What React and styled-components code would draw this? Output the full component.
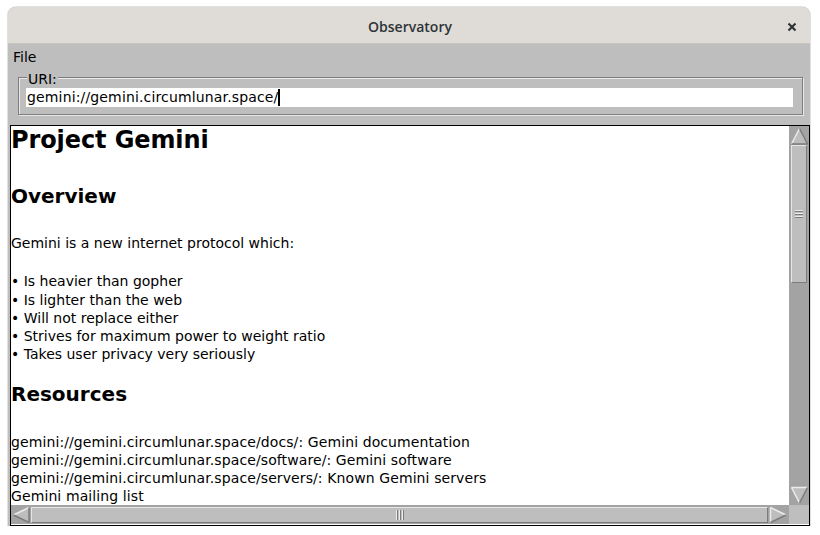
import React from "react";
import styled, { createGlobalStyle } from "styled-components";

const GlobalStyle = createGlobalStyle`
  html, body {
    margin: 0;
    background: #ffffff;
  }
  body {
    font-family: "DejaVu Sans", "Liberation Sans", sans-serif;
    color: #000;
  }
`;

const bullets = [
  "Is heavier than gopher",
  "Is lighter than the web",
  "Will not replace either",
  "Strives for maximum power to weight ratio",
  "Takes user privacy very seriously",
];

const links = [
  "gemini://gemini.circumlunar.space/docs/: Gemini documentation",
  "gemini://gemini.circumlunar.space/software/: Gemini software",
  "gemini://gemini.circumlunar.space/servers/: Known Gemini servers",
  "Gemini mailing list",
];

// little 3d arrow used at both ends of the scrollbars
const Arrow = ({ dir }) => {
  const pts = {
    up: [[9.5, 1.5], [1.5, 17], [17.5, 17]],
    down: [[1.5, 1.5], [17.5, 1.5], [9.5, 17]],
    left: [[1.5, 9], [17, 1.5], [17, 16.5]],
    right: [[1.5, 1.5], [1.5, 16.5], [17, 9]],
  }[dir];
  const [a, b, c] = pts;
  // which edges catch the light: [ab, ac, bc]
  const lit = {
    up: [true, false, false],
    down: [true, true, false],
    left: [true, false, false],
    right: [true, true, false],
  }[dir];
  const col = (on) => (on ? "#ececec" : "#7c7c7c");
  return (
    <svg width="19" height="18" viewBox="0 0 19 18">
      <polygon points={pts.map((p) => p.join(",")).join(" ")} fill="#bdbdbd" />
      <line x1={a[0]} y1={a[1]} x2={b[0]} y2={b[1]} stroke={col(lit[0])} strokeWidth="1.5" />
      <line x1={a[0]} y1={a[1]} x2={c[0]} y2={c[1]} stroke={col(lit[1])} strokeWidth="1.5" />
      <line x1={b[0]} y1={b[1]} x2={c[0]} y2={c[1]} stroke={col(lit[2])} strokeWidth="1.5" />
    </svg>
  );
};

const Grip = ({ vertical }) =>
  vertical ? (
    <svg width="8" height="8" viewBox="0 0 8 8">
      {[0, 3, 6].map((y) => (
        <g key={y}>
          <line x1="0" y1={y + 0.5} x2="8" y2={y + 0.5} stroke="#ececec" />
          <line x1="0" y1={y + 1.5} x2="8" y2={y + 1.5} stroke="#7c7c7c" />
        </g>
      ))}
    </svg>
  ) : (
    <svg width="8" height="10" viewBox="0 0 8 10">
      {[0, 3, 6].map((x) => (
        <g key={x}>
          <line x1={x + 0.5} y1="0" x2={x + 0.5} y2="10" stroke="#ececec" />
          <line x1={x + 1.5} y1="0" x2={x + 1.5} y2="10" stroke="#7c7c7c" />
        </g>
      ))}
    </svg>
  );

const App = () => {
  return (
    <>
      <GlobalStyle />
      <Window>
        <TitleBar>
          <Title>Observatory</Title>
          <CloseButton>
            <svg width="10" height="10" viewBox="0 0 10 10">
              <path d="M1.5 1.5 L8.5 8.5 M8.5 1.5 L1.5 8.5" stroke="#2e3436" strokeWidth="2.2" />
            </svg>
          </CloseButton>
        </TitleBar>

        <Body>
          <MenuBar>
            <MenuItem>File</MenuItem>
          </MenuBar>

          <LabelFrame>
            <FrameLabel>URI:</FrameLabel>
            <Entry>
              <EntryText>gemini://gemini.circumlunar.space/</EntryText>
              <Cursor />
            </Entry>
          </LabelFrame>

          <TextFrame>
            <TextArea>
              <H1>Project Gemini</H1>
              <H2 $top={31}>Overview</H2>
              <Line $top={26}>Gemini is a new internet protocol which:</Line>
              <Block $top={20}>
                {bullets.map((b) => (
                  <Line key={b}>• {b}</Line>
                ))}
              </Block>
              <H2 $top={18}>Resources</H2>
              <Block $top={27}>
                {links.map((l) => (
                  <Line key={l} $wide>
                    {l}
                  </Line>
                ))}
              </Block>
            </TextArea>

            <VScroll>
              <Arrow dir="up" />
              <VSlider>
                <Grip vertical />
              </VSlider>
              <Spacer />
              <Arrow dir="down" />
            </VScroll>

            <HScroll>
              <Arrow dir="left" />
              <HSlider>
                <Grip />
              </HSlider>
              <Arrow dir="right" />
            </HScroll>

            <Corner />
          </TextFrame>
        </Body>
      </Window>
    </>
  );
};

const Window = styled.div`
  margin: 7px 0 0 8px;
  width: 802px;
  border-radius: 8px 8px 0 0;
  overflow: hidden;
  box-shadow: 0 0 0 1px rgba(0, 0, 0, 0.12);
  background: #bebebe;
`;

const TitleBar = styled.div`
  position: relative;
  height: 37px;
  box-sizing: border-box;
  padding-top: 3px;
  display: flex;
  align-items: center;
  justify-content: center;
  background: #dfdcd8;
  border-bottom: 1px solid #c8c5c1;
`;

const Title = styled.div`
  font-family: "Open Sans", "Noto Sans", sans-serif;
  font-weight: 600;
  font-size: 14px;
  color: #2e3436;
  margin-left: 2px;
`;

const CloseButton = styled.div`
  position: absolute;
  right: 13px;
  top: 15px;
  width: 10px;
  height: 10px;
  display: flex;
`;

const Body = styled.div`
  display: flex;
  flex-direction: column;
  height: 482px;
`;

const MenuBar = styled.div`
  height: 26px;
  display: flex;
  align-items: center;
  padding-left: 5px;
`;

const MenuItem = styled.span`
  font-size: 14px;
  line-height: 16px;
  color: #000;
`;

const LabelFrame = styled.div`
  position: relative;
  margin: 7px 7px 0 10px;
  height: 39px;
  box-sizing: border-box;
  border: 1px solid #7e7e7e;
  box-shadow: inset 1px 1px 0 #e8e8e8, 1px 1px 0 #e8e8e8;
  padding: 10px 9px 0 7px;
`;

const FrameLabel = styled.span`
  position: absolute;
  top: -7px;
  left: 8px;
  padding: 0 1px;
  background: #bebebe;
  font-size: 14px;
  line-height: 16px;
`;

const Entry = styled.div`
  height: 19px;
  background: #ffffff;
  display: flex;
  align-items: center;
  padding-left: 1px;
`;

const EntryText = styled.span`
  font-size: 14px;
  line-height: 16px;
  letter-spacing: 0.15px;
  white-space: pre;
`;

const Cursor = styled.span`
  flex: 0 0 2px;
  width: 2px;
  height: 17px;
  background: #000;
`;

const TextFrame = styled.div`
  margin: 10px 0 0 2px;
  height: 401px;
  box-sizing: border-box;
  border: 1px solid #000;
  background: #ffffff;
  display: grid;
  grid-template-columns: 778px 20px;
  grid-template-rows: 379px 20px;
`;

const TextArea = styled.div`
  overflow: hidden;
  padding: 1px 0 0 0;
`;

const H1 = styled.div`
  font-size: 24px;
  font-weight: bold;
  line-height: 26px;
  letter-spacing: -0.1px;
`;

const H2 = styled.div`
  margin-top: ${(p) => p.$top}px;
  font-size: 20px;
  font-weight: bold;
  line-height: 24px;
`;

const Block = styled.div`
  margin-top: ${(p) => p.$top || 0}px;
`;

const Line = styled.div`
  margin-top: ${(p) => p.$top || 0}px;
  font-size: 14px;
  line-height: 18.25px;
  letter-spacing: ${(p) => (p.$wide ? "0.1px" : "0")};
  white-space: pre;
`;

const VScroll = styled.div`
  display: flex;
  flex-direction: column;
  align-items: center;
  background: #a3a3a3;
  padding: 1px 0;
  box-sizing: border-box;
`;

const VSlider = styled.div`
  width: 16px;
  height: 138px;
  box-sizing: border-box;
  background: #bebebe;
  border-top: 1px solid #e6e6e6;
  border-left: 1px solid #e6e6e6;
  border-right: 1px solid #7c7c7c;
  border-bottom: 1px solid #7c7c7c;
  display: flex;
  align-items: center;
  justify-content: center;
`;

const Spacer = styled.div`
  flex: 1;
`;

const HScroll = styled.div`
  display: flex;
  align-items: center;
  background: #a3a3a3;
  padding: 0 1px;
  height: 19px;
  box-sizing: border-box;
`;

const HSlider = styled.div`
  flex: 1;
  height: 16px;
  box-sizing: border-box;
  background: #bebebe;
  border-top: 1px solid #e6e6e6;
  border-left: 1px solid #e6e6e6;
  border-right: 1px solid #7c7c7c;
  border-bottom: 1px solid #7c7c7c;
  display: flex;
  align-items: center;
  justify-content: center;
  margin-right: 1px;
`;

const Corner = styled.div`
  background: #bebebe;
  height: 19px;
`;

export default App;
